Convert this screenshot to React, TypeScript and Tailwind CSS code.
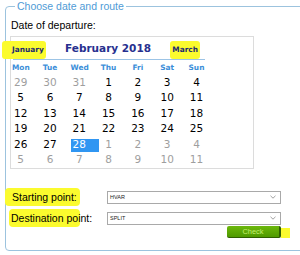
import React from 'react'

const weekDays = ['Mon', 'Tue', 'Wed', 'Thu', 'Fri', 'Sat', 'Sun']

// [day, inMonth]
const weeks: [number, boolean][][] = [
  [[29, false], [30, false], [31, false], [1, true], [2, true], [3, true], [4, true]],
  [[5, true], [6, true], [7, true], [8, true], [9, true], [10, true], [11, true]],
  [[12, true], [13, true], [14, true], [15, true], [16, true], [17, true], [18, true]],
  [[19, true], [20, true], [21, true], [22, true], [23, true], [24, true], [25, true]],
  [[26, true], [27, true], [28, true], [1, false], [2, false], [3, false], [4, false]],
  [[5, false], [6, false], [7, false], [8, false], [9, false], [10, false], [11, false]],
]

function DayCell({ day, inMonth, selected }: { day: number; inMonth: boolean; selected: boolean }) {
  return (
    <div className="h-[15.5px] pt-[2.4px]">
      <div className={`h-[12.7px] w-[28.6px] leading-[10.7px] ${selected ? 'bg-[#3096f2] text-white' : inMonth ? 'text-black' : 'text-[#9e9e9e]'}`}>
        <span className="inline-block w-[17.4px] text-center">{day}</span>
      </div>
    </div>
  )
}

function Calendar() {
  return (
    <div className="w-[244px] h-[133px] border border-[#dcdcdc] bg-white pl-[1px] font-['DejaVu_Sans',sans-serif]">
      {/* header */}
      <div className="w-[192px] ml-[1px] mt-[4px] flex items-baseline justify-between border-b border-[#9cc4e6] leading-[12px] pr-[5px]">
        <span className="font-bold text-[7.4px] text-[#1c2a70] bg-[#fbfb2e] -ml-[11px] pl-[10px] pr-[2px] py-[3px] rounded-[3px]">January</span>
        <span className="font-bold text-[10.5px] text-[#27308f]">February 2018</span>
        <span className="font-bold text-[7.4px] text-[#1c2a70] bg-[#fbfb2e] px-[2px] py-[3px] rounded-[3px]">March</span>
      </div>

      {/* week days */}
      <div className="grid grid-cols-[repeat(7,29.3px)] mt-[2.7px] leading-[10px]">
        {weekDays.map(d => (
          <span key={d} className="w-[17.4px] text-center font-bold text-[7.4px] text-[#3b8ed9]">{d}</span>
        ))}
      </div>

      {/* days */}
      <div className="mt-[1.9px] text-[10.5px]">
        {weeks.map((w, i) => (
          <div key={i} className="grid grid-cols-[repeat(7,29.3px)]">
            {w.map(([d, m], j) => (
              <DayCell key={j} day={d} inMonth={m} selected={m && d === 28} />
            ))}
          </div>
        ))}
      </div>
    </div>
  )
}

function Select({ value }: { value: string }) {
  return (
    <div className="w-[174px] h-[12.5px] border border-[#a9a9a9] bg-white flex items-center justify-between pl-[2px] pr-[4px]">
      <span className="text-[5.5px] text-[#222] leading-none">{value}</span>
      <svg width="6" height="4" viewBox="0 0 6 4" className="text-[#888]">
        <path d="M0.5 0.8 L3 3.2 L5.5 0.8" fill="none" stroke="currentColor" strokeWidth="0.8" />
      </svg>
    </div>
  )
}

export default function App() {
  return (
    <div className="w-[300px] h-[255px] overflow-hidden bg-white font-['Liberation_Sans',Arial,sans-serif]">
      <fieldset className="ml-[5px] w-[320px] h-[251px] border border-[#9cc3de] rounded-[4px] px-[4px]">
        <legend className="ml-[5px] px-[2px] text-[10.5px] leading-[12px] text-[#4f9bd6]">Choose date and route</legend>

        <div className="pl-[1px] mt-[7px] text-[10.5px] leading-[12px] text-black">Date of departure:</div>

        <div className="mt-[5px]">
          <Calendar />
        </div>

        <div className="mt-[22px] flex flex-col gap-[8.5px] text-[10.5px] leading-[12px] text-black">
          <div className="flex items-center">
            <div className="w-[97px] pl-[2px]">
              <span className="bg-[#fbfb2e] -ml-[7px] pl-[7px] pr-[3px] py-[3px] rounded-[4px]">Starting point:</span>
            </div>
            <Select value="HVAR" />
          </div>
          <div className="flex items-center">
            <div className="w-[97px] pl-[2px]">
              <span className="bg-[#fbfb2e] -ml-[3px] pl-[2px] pr-0 py-[3px] rounded-[4px]">Destination poi</span>
              <span>nt:</span>
            </div>
            <Select value="SPLIT" />
          </div>
        </div>

        <div className="ml-[97px] w-[174px] mt-[1px] flex justify-end leading-none">
          <div className="relative flex">
            <button className="w-[54px] h-[12px] rounded-[2px] bg-gradient-to-b from-[#6cb80c] to-[#4f9a00] border-r-2 border-b border-[#2f5f00] text-[7.4px] leading-[11px] text-[#c4ef70]">
              Check
            </button>
            <span className="absolute left-full top-[2px] w-[9px] h-[10px] bg-[#fbfb2e]" />
          </div>
        </div>
      </fieldset>
    </div>
  )
}
